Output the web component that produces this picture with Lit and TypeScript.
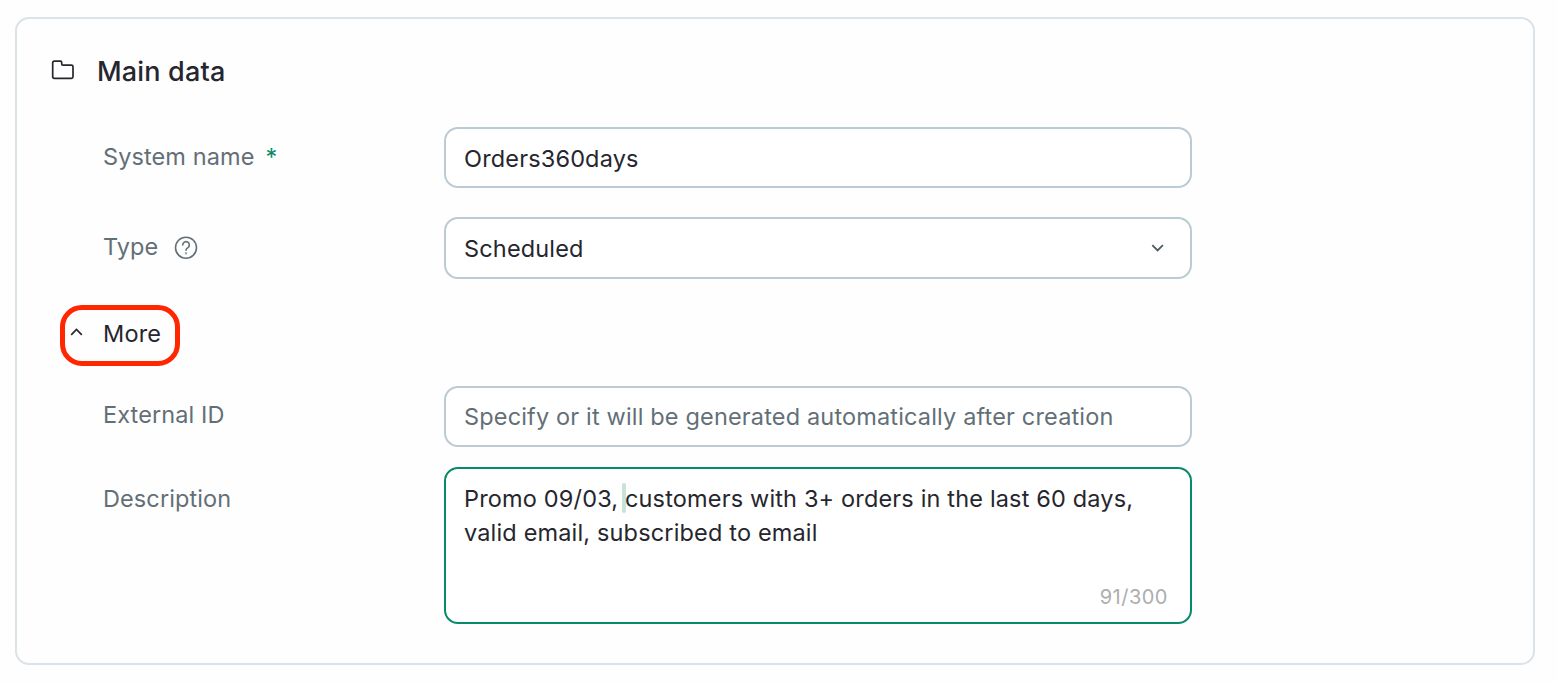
import { LitElement, html, css } from "lit";
import { customElement } from "lit/decorators.js";

@customElement("app-root")
export class AppRoot extends LitElement {
  static styles = css`
    :host {
      display: block;
      box-sizing: border-box;
      height: 682px;
      padding: 17px 23px 17px 15px;
      background: #fefefe;
      color: #26262e;
      font-family: Inter, "Liberation Sans", sans-serif;
      font-size: 23.5px;
      font-weight: 380;
      letter-spacing: 0.16px;
      line-height: 34px;
    }
    * {
      box-sizing: border-box;
    }
    svg {
      display: block;
      flex: none;
      fill: none;
      stroke: currentColor;
    }
    .card {
      height: 648px;
      padding: 36px 32px 0;
      border: 2px solid #dae3e7;
      border-radius: 14px;
    }
    .header {
      display: flex;
      align-items: center;
      gap: 21px;
      height: 34px;
      padding-left: 1px;
    }
    .header svg {
      margin-top: -5px;
    }
    h2 {
      margin: 0;
      font-size: 27px;
      font-weight: 500;
      letter-spacing: 0.17px;
      line-height: 34px;
    }
    .form {
      display: flex;
      flex-direction: column;
      padding: 38px 0 0 54px;
    }
    .row {
      display: grid;
      grid-template-columns: 341px 748px;
    }
    .row.type {
      margin: 29px 0 26px;
    }
    .row.external {
      margin: 20px 0;
    }
    .label {
      display: flex;
      padding-top: 13px;
      color: #636f77;
      letter-spacing: 0.1px;
    }
    .external .label {
      padding-top: 12px;
    }
    .description .label {
      padding-top: 15px;
    }
    .required {
      margin-left: 11px;
      color: #058b68;
    }
    .help {
      margin: 6px 0 0 16px;
    }
    .field {
      display: flex;
      align-items: center;
      justify-content: space-between;
      height: 61px;
      padding: 2px 24px 0 18px;
      border: 2px solid #bccbd3;
      border-radius: 14px;
      background: #fff;
    }
    .type .field {
      height: 62px;
    }
    .chevron {
      margin-top: -2px;
      color: #4f5a61;
    }
    .field.placeholder {
      padding-top: 1px;
      color: #636f77;
    }
    .textarea {
      display: flex;
      flex-direction: column;
      justify-content: space-between;
      height: 157px;
      padding: 13px 22px 8px 18px;
      border: 2px solid #058b68;
      border-radius: 14px;
      background: #fff;
    }
    .value {
      position: relative;
      isolation: isolate;
    }
    /* text cursor after the comma */
    .value::before {
      content: "";
      position: absolute;
      left: 158px;
      top: 1px;
      z-index: -1;
      width: 4px;
      height: 30px;
      border-radius: 2px;
      background: #c8e3da;
    }
    .counter {
      align-self: flex-end;
      color: #adadad;
      font-size: 20px;
      letter-spacing: 0.5px;
    }
    .more {
      display: flex;
      align-items: center;
      gap: 20px;
      width: 120px;
      height: 61px;
      margin-left: -43px;
      padding: 0 0 4px 5px;
      border: 5px solid #ff2600;
      border-radius: 22px;
    }
    .more svg {
      margin-top: -3px;
    }
  `;

  render() {
    return html`
      <div class="card">
        <div class="header">
          <svg width="26" height="24" viewBox="0 0 26 24" stroke-width="1.7" stroke-linejoin="round">
            <path d="M4.3 3.2h6.2q1.2 0 1.2 1.2v1.5q0 1.2 1.2 1.2h8.5q1.6 0 1.6 1.6v10q0 1.6-1.6 1.6H4.3q-1.6 0-1.6-1.6V4.8q0-1.6 1.6-1.6z" />
          </svg>
          <h2>Main data</h2>
        </div>

        <div class="form">
          <div class="row">
            <div class="label">System name<span class="required">*</span></div>
            <div class="field">Orders360days</div>
          </div>

          <div class="row type">
            <div class="label">
              Type
              <svg class="help" width="24" height="24" viewBox="0 0 24 24" stroke-width="1.6" stroke-linecap="round">
                <circle cx="12" cy="11.7" r="10.5" />
                <path d="M8.7 9a3.3 3.3 0 1 1 5.2 2.7c-1.2.8-1.9 1.3-1.9 2.5" />
                <circle cx="12" cy="17.3" r=".3" />
              </svg>
            </div>
            <div class="field">
              Scheduled
              <svg class="chevron" width="16" height="16" viewBox="0 0 16 16" stroke-width="1.8">
                <path d="M2.3 5.2l5.3 5.2 5.3-5.2" />
              </svg>
            </div>
          </div>

          <div class="more">
            <svg width="13" height="16" viewBox="0 0 13 16" stroke-width="1.7">
              <path d="M1.2 10.8 6.5 5.5l5.3 5.3" />
            </svg>
            More
          </div>

          <div class="row external">
            <div class="label">External ID</div>
            <div class="field placeholder">Specify or it will be generated automatically after creation</div>
          </div>

          <div class="row description">
            <div class="label">Description</div>
            <div class="textarea">
              <div class="value">
                Promo 09/03, customers with 3+ orders in the last 60 days, valid email, subscribed to email
              </div>
              <div class="counter">91/300</div>
            </div>
          </div>
        </div>
      </div>
    `;
  }
}
